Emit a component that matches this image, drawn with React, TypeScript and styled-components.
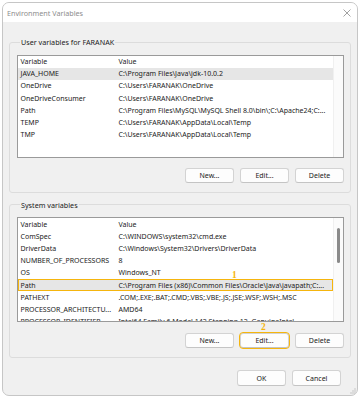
import styled, { createGlobalStyle } from "styled-components";

type Row = { name: string; value: string };

const ORANGE = "#f5b50e";

const userVars: Row[] = [
  { name: "JAVA_HOME", value: "C:\\Program Files\\Java\\jdk-10.0.2" },
  { name: "OneDrive", value: "C:\\Users\\FARANAK\\OneDrive" },
  { name: "OneDriveConsumer", value: "C:\\Users\\FARANAK\\OneDrive" },
  {
    name: "Path",
    value: "C:\\Program Files\\MySQL\\MySQL Shell 8.0\\bin\\;C:\\Apache24;C:...",
  },
  { name: "TEMP", value: "C:\\Users\\FARANAK\\AppData\\Local\\Temp" },
  { name: "TMP", value: "C:\\Users\\FARANAK\\AppData\\Local\\Temp" },
];

const systemVars: Row[] = [
  { name: "ComSpec", value: "C:\\WINDOWS\\system32\\cmd.exe" },
  { name: "DriverData", value: "C:\\Windows\\System32\\Drivers\\DriverData" },
  { name: "NUMBER_OF_PROCESSORS", value: "8" },
  { name: "OS", value: "Windows_NT" },
  {
    name: "Path",
    value: "C:\\Program Files (x86)\\Common Files\\Oracle\\Java\\javapath;C:...",
  },
  { name: "PATHEXT", value: ".COM;.EXE;.BAT;.CMD;.VBS;.VBE;.JS;.JSE;.WSF;.WSH;.MSC" },
  { name: "PROCESSOR_ARCHITECTU...", value: "AMD64" },
  {
    name: "PROCESSOR_IDENTIFIER",
    value: "Intel64 Family 6 Model 142 Stepping 12, GenuineIntel",
  },
];

const GlobalStyle = createGlobalStyle`
  body {
    margin: 0;
    background: #ffffff;
  }
`;

const Window = styled.div`
  margin: 2px;
  width: 356px;
  height: 394px;
  box-sizing: border-box;
  border: 1px solid #c6c6c6;
  border-radius: 7px;
  overflow: hidden;
  background: #f0f0f0;
  display: flex;
  flex-direction: column;
  font-family: "Noto Sans", "Liberation Sans", sans-serif;
  font-size: 7px;
  color: #1b1b1b;
`;

const TitleBar = styled.div`
  height: 19px;
  background: #ffffff;
  display: flex;
  align-items: center;
  justify-content: space-between;
  padding: 0 6px 0 4px;
  color: #8d8d8d;
  font-size: 7.2px;
`;

const Body = styled.div`
  flex: 1;
  display: flex;
  flex-direction: column;
  padding: 15px 6px 0 6px;
`;

const Group = styled.fieldset<{ $gap: number }>`
  margin: 0 0 7px 0;
  padding: 7.5px 6px 9px 7px;
  border: 1px solid #dcdcdc;
  border-radius: 3px;
  display: flex;
  flex-direction: column;
  gap: ${(p) => p.$gap}px;
  min-width: 0;
`;

const Legend = styled.legend`
  padding: 0 1px;
  margin-left: 3px;
  line-height: 10px;
  font-size: 7.2px;
`;

const List = styled.div<{ $height: number }>`
  height: ${(p) => p.$height}px;
  box-sizing: border-box;
  border: 1px solid #9a9a9a;
  background: #ffffff;
  display: flex;
  overflow: hidden;
`;

const Rows = styled.div`
  width: 315px;
  display: flex;
  flex-direction: column;
`;

const Line = styled.div<{ $selected?: boolean; $marked?: boolean; $header?: boolean }>`
  position: relative;
  flex: none;
  height: ${(p) => (p.$header ? "12px" : "12.25px")};
  display: grid;
  grid-template-columns: 98px 1fr;
  align-items: center;
  background: ${(p) => (p.$selected || p.$marked ? "#e6e6e6" : "transparent")};
  outline: ${(p) => (p.$marked ? `1.5px solid ${ORANGE}` : "none")};
  outline-offset: -1px;
  span {
    padding-left: 2.5px;
    padding-right: 3px;
    white-space: nowrap;
    overflow: hidden;
    text-overflow: ellipsis;
  }
`;

const Gutter = styled.div`
  flex: 1;
  border-left: 1px solid #f0f0f0;
  background: #fbfbfb;
  display: flex;
  justify-content: center;
`;

const Thumb = styled.div`
  margin-top: 10px;
  width: 2.5px;
  height: 35px;
  border-radius: 2px;
  background: #8a8a8a;
`;

const Badge = styled.div<{ $top: number; $left: number }>`
  position: absolute;
  top: ${(p) => p.$top}px;
  left: ${(p) => p.$left}px;
  color: ${ORANGE};
  font-family: "Liberation Serif", serif;
  font-weight: bold;
  font-size: 9.5px;
  line-height: 10px;
`;

const ButtonRow = styled.div`
  display: flex;
  justify-content: flex-end;
  gap: 6px;
`;

const Button = styled.div<{ $height?: number; $marked?: boolean }>`
  position: relative;
  width: 49px;
  height: ${(p) => p.$height ?? 15}px;
  box-sizing: border-box;
  border: 1px solid #d3d3d3;
  border-bottom-color: #c4c4c4;
  border-radius: 3px;
  background: #fdfdfd;
  display: flex;
  align-items: center;
  justify-content: center;
  outline: ${(p) => (p.$marked ? `1.5px solid ${ORANGE}` : "none")};
  outline-offset: 0px;
`;

const Footer = styled.div`
  display: flex;
  justify-content: flex-end;
  gap: 6px;
  padding: 5px 10px 0 0;
`;

const Grip = styled.svg`
  align-self: flex-end;
  margin: auto 1px 1px 0;
`;

const BottomRow = styled.div`
  flex: 1;
  display: flex;
  justify-content: flex-end;
`;

const VarList = ({
  rows,
  height,
  selected,
  marked,
  scroll,
}: {
  rows: Row[];
  height: number;
  selected?: number;
  marked?: number;
  scroll?: boolean;
}) => (
  <List $height={height}>
    <Rows>
      <Line $header>
        <span>Variable</span>
        <span>Value</span>
      </Line>
      {rows.map((r, i) => (
        <Line key={r.name} $selected={i === selected} $marked={i === marked}>
          <span>{r.name}</span>
          <span>{r.value}</span>
          {i === marked && (
            <Badge $top={-9} $left={214}>
              1
            </Badge>
          )}
        </Line>
      ))}
    </Rows>
    <Gutter>{scroll && <Thumb />}</Gutter>
  </List>
);

const App = () => (
  <>
    <GlobalStyle />
    <Window>
      <TitleBar>
        <span>Environment Variables</span>
        <svg width="8" height="8" viewBox="0 0 8 8">
          <path d="M0.5 0.5L7.5 7.5M7.5 0.5L0.5 7.5" stroke="#8a8a8a" strokeWidth="0.8" />
        </svg>
      </TitleBar>
      <Body>
        <Group $gap={10}>
          <Legend>User variables for FARANAK</Legend>
          <VarList rows={userVars} height={103} selected={0} />
          <ButtonRow>
            <Button>New...</Button>
            <Button>Edit...</Button>
            <Button>Delete</Button>
          </ButtonRow>
        </Group>
        <Group $gap={11}>
          <Legend>System variables</Legend>
          <VarList rows={systemVars} height={105} marked={4} scroll />
          <ButtonRow>
            <Button>New...</Button>
            <Button $marked>
              Edit...
              <Badge $top={-12} $left={20}>
                2
              </Badge>
            </Button>
            <Button>Delete</Button>
          </ButtonRow>
        </Group>
        <BottomRow>
          <Footer>
            <Button $height={16}>OK</Button>
            <Button $height={16}>Cancel</Button>
          </Footer>
        </BottomRow>
      </Body>
      <Grip width="6" height="6" viewBox="0 0 6 6">
        <rect x="4.5" y="0.5" width="1" height="1" fill="#a0a0a0" />
        <rect x="2.5" y="2.5" width="1" height="1" fill="#a0a0a0" />
        <rect x="4.5" y="2.5" width="1" height="1" fill="#a0a0a0" />
        <rect x="0.5" y="4.5" width="1" height="1" fill="#a0a0a0" />
        <rect x="2.5" y="4.5" width="1" height="1" fill="#a0a0a0" />
        <rect x="4.5" y="4.5" width="1" height="1" fill="#a0a0a0" />
      </Grip>
    </Window>
  </>
);

export default App;
